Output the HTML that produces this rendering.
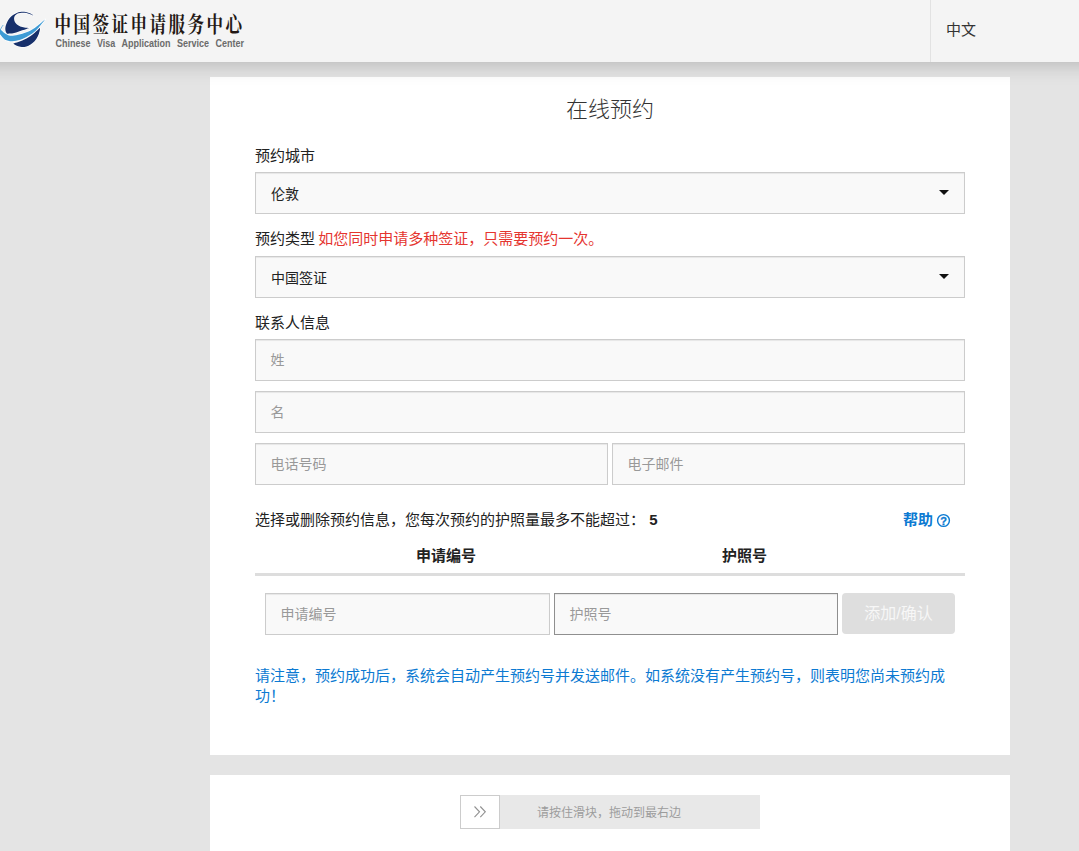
<!DOCTYPE html>
<html lang="zh-CN">
<head>
<meta charset="utf-8">
<title>在线预约</title>
<style>
*{box-sizing:border-box;margin:0;padding:0}
html,body{width:1079px;height:851px;overflow:hidden}
body{background:#e4e4e4;font-family:"Liberation Sans","Noto Sans CJK SC",sans-serif;font-size:15px;color:#222;position:relative}
.hdr{position:absolute;left:-40px;top:0;width:1159px;height:62px;background:#f4f4f4;box-shadow:0 0 22px rgba(0,0,0,.25);z-index:5}
.logo{position:absolute;left:40px;top:0}
.cn{position:absolute;left:94.5px;top:10px;font-family:"Noto Serif CJK SC","Liberation Serif",serif;font-weight:700;font-size:16.5px;letter-spacing:2.5px;color:#231815;white-space:nowrap;line-height:26px;transform:scaleY(1.28);transform-origin:0 50%}
.en{position:absolute;left:95.5px;top:38px;font-size:9px;font-weight:bold;color:#6b6b6b;white-space:nowrap;word-spacing:4px;line-height:12px;transform:scaleY(1.15);transform-origin:0 50%}
.lang{position:absolute;left:970px;top:0;width:149px;height:62px;border-left:1px solid #e2e2e2;padding-left:15px;line-height:60px;font-size:15px;color:#333}
.card{position:absolute;left:210px;width:800px;background:#fff}
.c1{top:77px;height:678px}
.c2{top:775px;height:90px}
h1{position:absolute;left:0;width:800px;top:18px;text-align:center;font-size:22px;font-weight:300;color:#333;line-height:30px}
.lbl{position:absolute;left:45px;font-size:15px;line-height:20px;color:#222;white-space:nowrap}
.red{color:#e5352f;margin-left:-1px}
.box{position:absolute;left:45px;width:710px;height:42px;border:1px solid #ccc;background:#f9f9f9;font-size:14px;line-height:40px;padding-left:15px;color:#222;box-shadow:inset 0 1px 1px rgba(0,0,0,.075)}
.sel{line-height:42px}
.ph{color:#999;padding-left:14.5px}
.arrow{position:absolute;right:15px;top:17px;width:0;height:0;border-left:5px solid transparent;border-right:5px solid transparent;border-top:5px solid #111}
.help{position:absolute;left:693px;top:433px;font-weight:bold;color:#0c7ad2;font-size:15px;line-height:20px;white-space:nowrap}
.th{position:absolute;top:469px;font-weight:bold;font-size:15px;line-height:20px;color:#222}
.hr{position:absolute;left:45px;top:496px;width:710px;height:3px;background:#ddd}
.btn{position:absolute;left:632px;top:516px;width:113px;height:41px;background:#dedede;border-radius:4px;color:#f7f7f7;font-size:16px;text-align:center;line-height:42px}
.note{position:absolute;left:45px;top:589px;width:710px;color:#0c7ad2;font-size:15px;line-height:20px}
.slide{position:absolute;left:250px;top:20px;width:300px;height:34px;background:#e8e8e8;color:#9c9c9c;font-size:12px;line-height:34px}
.slide span{position:absolute;left:77px;top:1px}
.knob{position:absolute;left:0;top:0;width:40px;height:34px;background:#fff;border:1px solid #ccc}
</style>
</head>
<body>
<div class="hdr">
<svg class="logo" width="60" height="62" viewBox="0 0 60 62">
<g fill="none" stroke="#fff" stroke-width="1.3" stroke-linejoin="round"><path d="M33.6 15.7C33.1 15.3 31.5 14.1 30.5 13.6C29.5 13.1 28.6 12.7 27.5 12.4C26.4 12.1 25.2 11.9 24.0 11.8C22.8 11.7 21.2 11.8 20.0 12.0C18.8 12.2 18.0 12.4 16.8 12.9C15.6 13.4 14.2 14.1 13.0 15.0C11.8 15.9 10.4 17.1 9.5 18.2C8.6 19.3 7.9 20.6 7.3 21.8C6.7 23.0 6.1 24.4 5.8 25.5C5.5 26.6 5.3 27.6 5.3 28.5C5.3 29.4 5.3 30.3 5.6 31.2C5.9 32.1 6.8 33.3 7.0 33.7C7.5 33.7 8.8 33.6 10.0 33.5C11.2 33.4 12.7 33.2 14.1 32.9C15.5 32.6 16.8 32.1 18.2 31.7C19.6 31.3 20.9 30.8 22.3 30.3C23.7 29.9 25.3 29.4 26.5 29.0C27.7 28.6 28.8 28.2 29.3 28.1C28.5 28.0 25.9 27.9 24.4 27.6C22.9 27.3 21.5 27.0 20.3 26.5C19.1 26.0 17.9 25.2 17.0 24.5C16.1 23.8 15.4 22.9 14.9 22.0C14.4 21.1 14.2 20.0 14.1 19.1C14.0 18.2 14.2 17.3 14.5 16.6C14.8 15.9 15.3 15.2 16.0 14.7C16.7 14.1 17.5 13.6 18.5 13.3C19.5 13.0 20.7 12.8 21.8 12.7C22.9 12.6 24.0 12.7 25.0 12.8C26.0 12.9 27.0 13.2 28.0 13.5C29.0 13.8 30.1 14.2 31.0 14.6C31.9 15.0 33.2 15.5 33.6 15.7Z"/><path d="M45.3 19.2C44.2 20.1 40.6 23.4 38.8 24.8C37.0 26.2 36.1 27.0 34.7 27.9C33.3 28.8 32.0 29.7 30.6 30.4C29.2 31.1 27.9 31.7 26.5 32.3C25.1 32.8 23.7 33.3 22.3 33.7C20.9 34.1 19.6 34.5 18.2 34.8C16.8 35.1 15.4 35.5 14.1 35.6C12.8 35.8 11.6 35.9 10.5 35.7C9.4 35.6 8.4 35.2 7.3 34.7C6.2 34.2 4.8 33.3 4.0 32.7C3.1 32.1 2.9 31.6 2.2 31.0C1.5 30.4 0.4 29.2 0.0 28.9L0 34.3C0.6 35.0 2.5 37.4 3.6 38.4C4.7 39.4 5.4 39.8 6.5 40.3C7.6 40.8 8.7 41.1 10.0 41.2C11.3 41.3 12.7 41.2 14.1 41.0C15.5 40.8 16.8 40.5 18.2 40.2C19.6 39.9 20.9 39.5 22.3 39.0C23.7 38.5 25.1 37.8 26.5 37.0C27.9 36.2 29.2 35.4 30.6 34.5C32.0 33.6 33.3 32.6 34.7 31.4C36.1 30.2 37.0 29.4 38.8 27.4C40.6 25.4 44.2 20.6 45.3 19.2Z"/><path d="M39.6 28.0C38.8 28.8 36.2 31.5 34.7 32.8C33.2 34.1 32.0 35.0 30.6 36.0C29.2 37.0 27.9 37.8 26.5 38.5C25.1 39.2 23.7 39.8 22.3 40.4C20.9 41.0 19.7 41.5 18.2 42.0C16.7 42.5 14.1 43.2 13.3 43.4C13.8 43.8 15.0 45.0 16.2 45.5C17.4 46.0 18.9 46.5 20.3 46.7C21.7 46.9 23.0 47.1 24.4 46.9C25.8 46.7 27.1 46.4 28.5 45.7C29.9 45.1 31.3 44.1 32.6 43.0C33.9 41.9 35.3 40.4 36.3 38.9C37.3 37.4 38.2 35.5 38.8 33.9C39.4 32.2 39.9 30.0 40.0 29.0C40.1 28.0 39.7 28.2 39.6 28.0Z"/></g>
<path d="M33.6 15.7C33.1 15.3 31.5 14.1 30.5 13.6C29.5 13.1 28.6 12.7 27.5 12.4C26.4 12.1 25.2 11.9 24.0 11.8C22.8 11.7 21.2 11.8 20.0 12.0C18.8 12.2 18.0 12.4 16.8 12.9C15.6 13.4 14.2 14.1 13.0 15.0C11.8 15.9 10.4 17.1 9.5 18.2C8.6 19.3 7.9 20.6 7.3 21.8C6.7 23.0 6.1 24.4 5.8 25.5C5.5 26.6 5.3 27.6 5.3 28.5C5.3 29.4 5.3 30.3 5.6 31.2C5.9 32.1 6.8 33.3 7.0 33.7C7.5 33.7 8.8 33.6 10.0 33.5C11.2 33.4 12.7 33.2 14.1 32.9C15.5 32.6 16.8 32.1 18.2 31.7C19.6 31.3 20.9 30.8 22.3 30.3C23.7 29.9 25.3 29.4 26.5 29.0C27.7 28.6 28.8 28.2 29.3 28.1C28.5 28.0 25.9 27.9 24.4 27.6C22.9 27.3 21.5 27.0 20.3 26.5C19.1 26.0 17.9 25.2 17.0 24.5C16.1 23.8 15.4 22.9 14.9 22.0C14.4 21.1 14.2 20.0 14.1 19.1C14.0 18.2 14.2 17.3 14.5 16.6C14.8 15.9 15.3 15.2 16.0 14.7C16.7 14.1 17.5 13.6 18.5 13.3C19.5 13.0 20.7 12.8 21.8 12.7C22.9 12.6 24.0 12.7 25.0 12.8C26.0 12.9 27.0 13.2 28.0 13.5C29.0 13.8 30.1 14.2 31.0 14.6C31.9 15.0 33.2 15.5 33.6 15.7Z" fill="#17306b"/>
<path d="M45.3 19.2C44.2 20.1 40.6 23.4 38.8 24.8C37.0 26.2 36.1 27.0 34.7 27.9C33.3 28.8 32.0 29.7 30.6 30.4C29.2 31.1 27.9 31.7 26.5 32.3C25.1 32.8 23.7 33.3 22.3 33.7C20.9 34.1 19.6 34.5 18.2 34.8C16.8 35.1 15.4 35.5 14.1 35.6C12.8 35.8 11.6 35.9 10.5 35.7C9.4 35.6 8.4 35.2 7.3 34.7C6.2 34.2 4.8 33.3 4.0 32.7C3.1 32.1 2.9 31.6 2.2 31.0C1.5 30.4 0.4 29.2 0.0 28.9L0 34.3C0.6 35.0 2.5 37.4 3.6 38.4C4.7 39.4 5.4 39.8 6.5 40.3C7.6 40.8 8.7 41.1 10.0 41.2C11.3 41.3 12.7 41.2 14.1 41.0C15.5 40.8 16.8 40.5 18.2 40.2C19.6 39.9 20.9 39.5 22.3 39.0C23.7 38.5 25.1 37.8 26.5 37.0C27.9 36.2 29.2 35.4 30.6 34.5C32.0 33.6 33.3 32.6 34.7 31.4C36.1 30.2 37.0 29.4 38.8 27.4C40.6 25.4 44.2 20.6 45.3 19.2Z" fill="#3e9bd5"/>
<path d="M3.2 25C1.6 27 0.6 29 0 30.6" fill="none" stroke="#3e9bd5" stroke-width="0.7"/>
<path d="M39.6 28.0C38.8 28.8 36.2 31.5 34.7 32.8C33.2 34.1 32.0 35.0 30.6 36.0C29.2 37.0 27.9 37.8 26.5 38.5C25.1 39.2 23.7 39.8 22.3 40.4C20.9 41.0 19.7 41.5 18.2 42.0C16.7 42.5 14.1 43.2 13.3 43.4C13.8 43.8 15.0 45.0 16.2 45.5C17.4 46.0 18.9 46.5 20.3 46.7C21.7 46.9 23.0 47.1 24.4 46.9C25.8 46.7 27.1 46.4 28.5 45.7C29.9 45.1 31.3 44.1 32.6 43.0C33.9 41.9 35.3 40.4 36.3 38.9C37.3 37.4 38.2 35.5 38.8 33.9C39.4 32.2 39.9 30.0 40.0 29.0C40.1 28.0 39.7 28.2 39.6 28.0Z" fill="#17306b"/>
</svg>
<div class="cn">中国签证申请服务中心</div>
<div class="en">Chinese Visa Application Service Center</div>
<div class="lang">中文</div>
</div>

<div class="card c1">
<h1>在线预约</h1>
<div class="lbl" style="top:69px">预约城市</div>
<div class="box sel" style="top:95px">伦敦<i class="arrow"></i></div>
<div class="lbl" style="top:152px">预约类型 <span class="red">如您同时申请多种签证，只需要预约一次。</span></div>
<div class="box sel" style="top:179px">中国签证<i class="arrow"></i></div>
<div class="lbl" style="top:236px">联系人信息</div>
<div class="box ph" style="top:262px">姓</div>
<div class="box ph" style="top:314px">名</div>
<div class="box ph" style="top:366px;width:353px">电话号码</div>
<div class="box ph" style="top:366px;left:402px;width:353px">电子邮件</div>
<div class="lbl" style="top:433px">选择或删除预约信息，您每次预约的护照量最多不能超过： <b>5</b></div>
<div class="help">帮助 <svg width="15" height="15" viewBox="0 0 15 15" style="vertical-align:-3px;margin-left:-1px"><circle cx="7.5" cy="7.5" r="5.9" fill="none" stroke="#0c7ad2" stroke-width="1.4"/><text x="7.5" y="11.5" text-anchor="middle" fill="#0c7ad2" stroke="#0c7ad2" stroke-width=".3" style="font:bold 11px 'Liberation Sans',sans-serif">?</text></svg></div>
<div class="th" style="left:206px">申请编号</div>
<div class="th" style="left:512px">护照号</div>
<div class="hr"></div>
<div class="box ph" style="top:516px;left:55px;width:285px">申请编号</div>
<div class="box ph" style="top:516px;left:344px;width:284px;border-color:#8f8f8f">护照号</div>
<div class="btn">添加/确认</div>
<div class="note">请注意，预约成功后，系统会自动产生预约号并发送邮件。如系统没有产生预约号，则表明您尚未预约成功！</div>
</div>

<div class="card c2">
<div class="slide"><span>请按住滑块，拖动到最右边</span><div class="knob"><svg width="38" height="32" viewBox="0 0 38 32" style="display:block"><path d="M13.5 10.5L18.5 15.8L13.5 21.1M19.3 10.5L24.3 15.8L19.3 21.1" fill="none" stroke="#909090" stroke-width="1.1"/></svg></div></div>
</div>
</body>
</html>
